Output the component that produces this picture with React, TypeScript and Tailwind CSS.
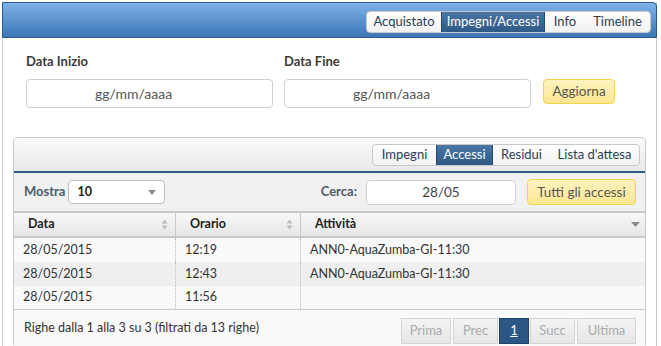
import React from "react";

const rows = [
  { data: "28/05/2015", ora: "12:19", att: "ANN0-AquaZumba-GI-11:30" },
  { data: "28/05/2015", ora: "12:43", att: "ANN0-AquaZumba-GI-11:30" },
  { data: "28/05/2015", ora: "11:56", att: "" },
];

function SortIcon() {
  return (
    <svg width="7" height="11" viewBox="0 0 7 11" className="shrink-0">
      <path d="M3.5 0.5 L6.5 4.5 L0.5 4.5 Z" fill="#bdbdbd" />
      <path d="M3.5 10.5 L6.5 6.5 L0.5 6.5 Z" fill="#bdbdbd" />
    </svg>
  );
}

function Tabs({ items, active, widths }: { items: string[]; active: string; widths: string[] }) {
  return (
    <div className="flex h-[22px] rounded-[4px] border border-[#c8c8c8] bg-gradient-to-b from-white to-[#f1f1f1] text-[13px] text-[#2c3e55] overflow-hidden">
      {items.map((t, i) => (
        <div
          key={t}
          className={
            t === active
              ? `flex items-center justify-center ${widths[i]} bg-gradient-to-b from-[#4a76a4] to-[#2f5a86] text-white border-x border-[#24476c]`
              : `flex items-center justify-center ${widths[i]}`
          }
        >
          {t}
        </div>
      ))}
    </div>
  );
}

function YellowButton({ label, className }: { label: string; className: string }) {
  return (
    <div
      className={`flex items-center justify-center rounded-[4px] border border-[#f3d24e] bg-gradient-to-b from-[#fff3bf] to-[#fde68f] text-[13.5px] text-[#555] ${className}`}
    >
      {label}
    </div>
  );
}

export default function App() {
  return (
    <div className="w-[661px] h-[346px] bg-white pt-[2px] pl-[2px] font-['Lato','Open_Sans',sans-serif] text-[#333] overflow-hidden">
      <div className="w-[655px] h-[344px] border-l border-r border-[#c9c9c9]">
        {/* top bar */}
        <div className="h-[36px] -ml-px -mr-px rounded-tr-[4px] border border-[#2b5b8d] bg-gradient-to-b from-[#7db2ea] to-[#3d77b4] flex items-center justify-end pr-[5px] pt-[4px]">
          <Tabs
            items={["Acquistato", "Impegni/Accessi", "Info", "Timeline"]}
            active="Impegni/Accessi"
            widths={["w-[74px]", "w-[104px]", "w-[40px]", "w-[65px]"]}
          />
        </div>

        {/* date filters */}
        <div className="flex items-end pl-[23px] pt-[14px] gap-[11px]">
          <div className="flex flex-col">
            <div className="text-[13px] font-bold text-[#3a3a3a] h-[18px] leading-[18px]">Data Inizio</div>
            <div className="mt-[9px] w-[247px] h-[29px] rounded-[4px] border border-[#cfcfcf] flex items-center pl-[68px] text-[14px] text-[#555]">
              gg/mm/aaaa
            </div>
          </div>
          <div className="flex flex-col">
            <div className="text-[13px] font-bold text-[#3a3a3a] h-[18px] leading-[18px]">Data Fine</div>
            <div className="mt-[9px] w-[247px] h-[29px] rounded-[4px] border border-[#cfcfcf] flex items-center pl-[68px] text-[14px] text-[#555]">
              gg/mm/aaaa
            </div>
          </div>
          <YellowButton label="Aggiorna" className="w-[72px] h-[25px] mb-[4px] ml-[1px]" />
        </div>

        {/* inner panel */}
        <div className="ml-[10px] mt-[29px] w-[633px] rounded-[4px] border border-[#c9c9c9] bg-[#f7f7f7] overflow-hidden">
          <div className="h-[35px] bg-gradient-to-b from-[#fafafa] to-[#e9e9e9] border-b-2 border-[#2f5a86] flex items-center justify-end pr-[5px] pt-[1px]">
            <Tabs
              items={["Impegni", "Accessi", "Residui", "Lista d'attesa"]}
              active="Accessi"
              widths={["w-[63px]", "w-[57px]", "w-[57px]", "w-[89px]"]}
            />
          </div>

          {/* toolbar */}
          <div className="h-[38px] bg-[#f1f1f1] flex items-center pl-[10px] pr-[9px]">
            <span className="text-[13px] font-bold text-[#4f5d6d]">Mostra</span>
            <div className="ml-[3px] w-[97px] h-[24px] rounded-[4px] border border-[#bdbdbd] bg-white flex items-center justify-between pl-[8px] pr-[8px]">
              <span className="text-[12.5px] font-bold text-[#222]">10</span>
              <svg width="8" height="5" viewBox="0 0 8 5">
                <path d="M0 0 L8 0 L4 5 Z" fill="#8a8a8a" />
              </svg>
            </div>
            <span className="ml-auto text-[13px] font-bold text-[#4f5d6d]">Cerca:</span>
            <div className="ml-[9px] w-[150px] h-[25px] rounded-[4px] border border-[#cfcfcf] bg-white flex items-center justify-center text-[13.5px] text-[#444]">
              28/05
            </div>
            <YellowButton label="Tutti gli accessi" className="ml-[11px] w-[109px] h-[26px]" />
          </div>

          {/* table */}
          <div className="border-t-2 border-[#c9c9c9]">
            <div className="flex h-[25px] bg-gradient-to-b from-[#f8f8f8] to-[#e6e6e6] border-b-2 border-[#c9c9c9] text-[12.5px] font-bold text-[#222]">
              <div className="w-[162px] flex items-center justify-between pl-[14px] pr-[7px] border-r border-[#c9c9c9]">
                Data <SortIcon />
              </div>
              <div className="w-[125px] flex items-center justify-between pl-[14px] pr-[7px] border-r border-[#c9c9c9]">
                Orario <SortIcon />
              </div>
              <div className="flex-1 flex items-center justify-between pl-[14px] pr-[5px]">
                Attività
                <svg width="9" height="5" viewBox="0 0 9 5">
                  <path d="M0 0 L9 0 L4.5 5 Z" fill="#8c8c8c" />
                </svg>
              </div>
            </div>
            {rows.map((r, i) => (
              <div
                key={i}
                className={`flex h-[24px] text-[12.5px] text-[#333] ${i === 1 ? "bg-[#efefef]" : "bg-[#f9f9f9]"} ${i === 2 ? "border-b border-[#c9c9c9]" : ""}`}
              >
                <div className="w-[162px] flex items-center pl-[9px] border-r border-dotted border-[#bbb]">{r.data}</div>
                <div className="w-[125px] flex items-center pl-[9px] border-r border-dotted border-[#bbb]">{r.ora}</div>
                <div className="flex-1 flex items-center pl-[9px]">{r.att}</div>
              </div>
            ))}
          </div>

          {/* footer */}
          <div className="h-[37px] bg-[#f9f9f9] flex items-center pl-[10px] pr-[8px]">
            <span className="text-[12.5px] text-[#333]">Righe dalla 1 alla 3 su 3 (filtrati da 13 righe)</span>
            <div className="ml-auto flex h-[26px] mt-[4px] text-[13px]">
              {[
                ["Prima", "w-[50px]"],
                ["Prec", "w-[45px]"],
                ["1", "w-[30px]"],
                ["Succ", "w-[45px]"],
                ["Ultima", "w-[59px]"],
              ].map(([p, w]) =>
                p === "1" ? (
                  <div key={p} className={`${w} flex items-center justify-center bg-[#2c5683] border border-[#1f4266] text-white underline`}>
                    1
                  </div>
                ) : (
                  <div
                    key={p}
                    className={`${w} flex items-center justify-center mx-[1px] bg-gradient-to-b from-[#f4f4f4] to-[#e6e6e6] border border-[#d4d4d4] text-[#aaa]`}
                  >
                    {p}
                  </div>
                )
              )}
            </div>
          </div>
        </div>
      </div>
    </div>
  );
}
